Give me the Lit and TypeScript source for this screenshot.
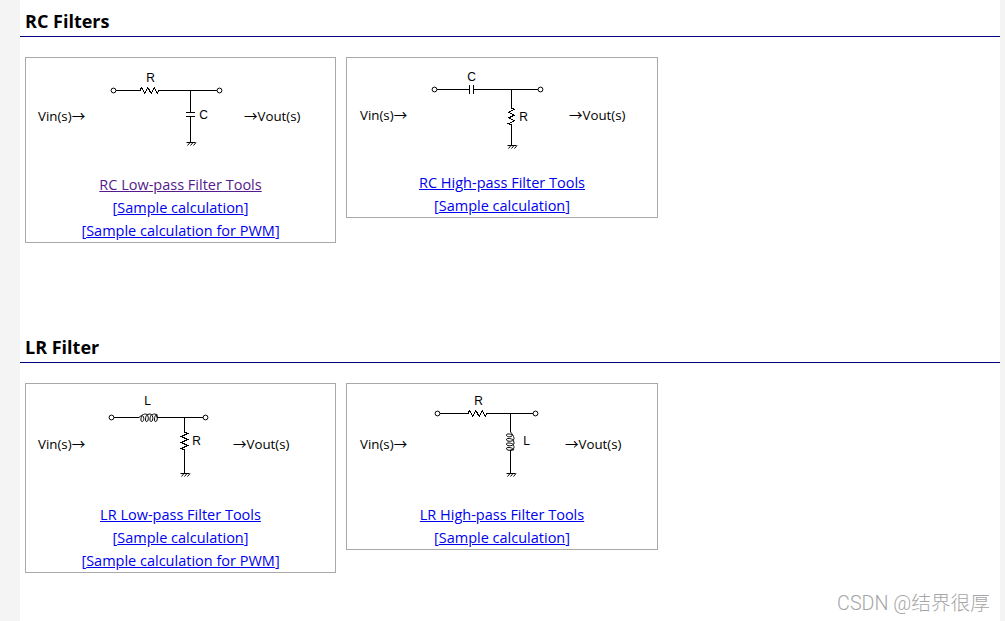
import { LitElement, html, css, svg } from "lit";
import { customElement } from "lit/decorators.js";

const resistorH = (x: number, y: number, w: number) => {
  const n = 3, s = w / (n * 2);
  let d = `M${x} ${y}`;
  for (let i = 0; i < n; i++) {
    d += ` L${x + s * (2 * i + 0.5)} ${y - 3} L${x + s * (2 * i + 1.5)} ${y + 3}`;
  }
  d += ` L${x + w} ${y}`;
  return svg`<path d=${d} />`;
};
const resistorV = (x: number, y: number, h: number) => {
  const n = 3, s = h / (n * 2);
  let d = `M${x} ${y}`;
  for (let i = 0; i < n; i++) {
    d += ` L${x + 3} ${y + s * (2 * i + 0.5)} L${x - 3} ${y + s * (2 * i + 1.5)}`;
  }
  d += ` L${x} ${y + h}`;
  return svg`<path d=${d} />`;
};
const coilH = (x: number, y: number, w: number) => {
  const n = 4, s = w / n;
  let d = `M${x} ${y}`;
  for (let i = 0; i < n; i++) {
    d += ` C${x + s * i + s * 1.3} ${y - 6} ${x + s * i + s * 1.3} ${y + 5} ${x + s * i + s * 0.6} ${y + 4}`;
    d += ` C${x + s * i + s * 0.2} ${y + 3} ${x + s * i + s * 0.6} ${y - 4} ${x + s * (i + 1)} ${y - 3}`;
  }
  d += ` L${x + w} ${y}`;
  return svg`<path class="soft" d=${d} />`;
};
const coilV = (x: number, y: number, h: number) => {
  const n = 4, s = h / n;
  let d = `M${x} ${y}`;
  for (let i = 0; i < n; i++) {
    d += ` C${x + 6} ${y + s * i + s * 1.3} ${x - 5} ${y + s * i + s * 1.3} ${x - 4} ${y + s * i + s * 0.6}`;
    d += ` C${x - 3} ${y + s * i + s * 0.2} ${x + 4} ${y + s * i + s * 0.6} ${x + 3} ${y + s * (i + 1)}`;
  }
  d += ` L${x} ${y + h}`;
  return svg`<path class="soft" d=${d} />`;
};
const ground = (x: number, y: number) => svg`
  <path class="soft" d="M${x - 4} ${y + 0.5} H${x + 5} M${x - 3} ${y + 3.5} L${x - 0.5} ${y + 0.5} M${x} ${y + 3.5} L${x + 2.5} ${y + 0.5} M${x + 3} ${y + 3.5} L${x + 5.5} ${y + 0.5}" />`;
const term = (x: number, y: number) => svg`<circle class="soft" cx=${x} cy=${y} r="2.4" />`;
const wire = (x1: number, y1: number, x2: number, y2: number) =>
  svg`<path d="M${x1} ${y1} L${x2} ${y2}" />`;
const label = (t: string, x: number, y: number) =>
  svg`<text x=${x} y=${y} text-anchor="middle">${t}</text>`;

const circuits = {
  rcLow: svg`
    ${term(113.5, 90.5)}${wire(116, 90.5, 140, 90.5)}${resistorH(140, 90.5, 19)}
    ${wire(159, 90.5, 217, 90.5)}${term(219.5, 90.5)}
    ${wire(190.5, 90.5, 190.5, 112.5)}${wire(186, 112.5, 195, 112.5)}${wire(186, 116.5, 195, 116.5)}
    ${wire(190.5, 116.5, 190.5, 142)}${ground(190.5, 142)}
    ${label("R", 150.5, 81.5)}${label("C", 203.5, 119)}`,
  rcHigh: svg`
    ${term(434.5, 89.5)}${wire(437, 89.5, 469.5, 89.5)}
    ${wire(469.5, 85, 469.5, 94)}${wire(473.5, 85, 473.5, 94)}
    ${wire(473.5, 89.5, 538, 89.5)}${term(540.5, 89.5)}
    ${wire(511.5, 89.5, 511.5, 108)}${resistorV(511.5, 108, 17)}${wire(511.5, 125, 511.5, 145)}${ground(511.5, 145)}
    ${label("C", 471.5, 80.5)}${label("R", 523.5, 121)}`,
  lrLow: svg`
    ${term(111.5, 417.5)}${wire(114, 417.5, 139, 417.5)}${coilH(139, 417.5, 18)}
    ${wire(157, 417.5, 204, 417.5)}${term(205.5, 417.5)}
    ${wire(184.5, 417.5, 184.5, 432)}${resistorV(184.5, 432, 18)}${wire(184.5, 450, 184.5, 473)}${ground(184.5, 473)}
    ${label("L", 147.5, 405)}${label("R", 196.5, 445)}`,
  lrHigh: svg`
    ${term(437.5, 413.5)}${wire(440, 413.5, 468, 413.5)}${resistorH(468, 413.5, 19)}
    ${wire(487, 413.5, 533, 413.5)}${term(535.5, 413.5)}
    ${wire(510.5, 413.5, 510.5, 432)}${coilV(510.5, 432, 18)}${wire(510.5, 450, 510.5, 473)}${ground(510.5, 473)}
    ${label("R", 478.5, 405)}${label("L", 526.5, 445)}`,
};

type Item = {
  key: keyof typeof circuits;
  originX: number;
  originY: number;
  rowH: number;
  vinW: number;
  voutGap: number;
  title: string;
  visited?: boolean;
  pwm: boolean;
};

const sections: { name: string; items: Item[] }[] = [
  {
    name: "RC Filters",
    items: [
      { key: "rcLow", originX: 100, originY: 58, rowH: 115, vinW: 62, voutGap: 14, title: "RC Low-pass Filter Tools", visited: true, pwm: true },
      { key: "rcHigh", originX: 425, originY: 58, rowH: 113, vinW: 65, voutGap: 14, title: "RC High-pass Filter Tools", pwm: false },
    ],
  },
  {
    name: "LR Filter",
    items: [
      { key: "lrLow", originX: 100, originY: 384, rowH: 119, vinW: 62, voutGap: 3, title: "LR Low-pass Filter Tools", pwm: true },
      { key: "lrHigh", originX: 425, originY: 384, rowH: 119, vinW: 65, voutGap: 10, title: "LR High-pass Filter Tools", pwm: false },
    ],
  },
];

@customElement("app-root")
export class AppRoot extends LitElement {
  static styles = css`
    :host {
      display: block;
      position: relative;
      height: 621px;
      overflow: hidden;
      background: #f4f4f4;
      font-family: "Open Sans", "Liberation Sans", sans-serif;
      font-size: 14px;
      color: #000;
    }
    .page {
      margin: 0 5px 0 20px;
      height: 621px;
      background: #fff;
    }
    .section {
      height: 326px;
    }
    .heading {
      margin: 0;
      padding: 8px 0 0 5px;
      box-sizing: border-box;
      border-bottom: 1px solid #000080;
      height: 37px;
      font-size: 18px;
      line-height: 27px;
      font-weight: 700;
    }
    .cards {
      display: flex;
      align-items: flex-start;
      gap: 10px;
      padding: 20px 0 0 5px;
    }
    .card {
      box-sizing: border-box;
      width: 311px;
      border: 1px solid #a9a9a9;
    }
    .card + .card {
      width: 312px;
    }
    .row {
      display: flex;
      padding-left: 12px;
    }
    .card + .card .row {
      padding-left: 13px;
    }
    .side {
      flex: none;
      align-self: center;
      white-space: nowrap;
      line-height: 20px;
      font-size: 13.3px;
    }
    .arrow {
      font-family: "Noto Sans CJK JP", sans-serif;
      font-size: 13.5px;
      line-height: 1;
    }
    svg {
      flex: none;
      fill: none;
      stroke: #000;
      stroke-width: 1;
      width: 130px;
      shape-rendering: crispEdges;
    }
    svg .soft {
      shape-rendering: auto;
    }
    svg circle {
      fill: #fff;
    }
    svg text {
      fill: #000;
      stroke: none;
      font-family: "Liberation Sans", sans-serif;
      font-size: 12px;
    }
    .links {
      text-align: center;
      line-height: 23px;
      font-size: 14.5px;
      color: #0000ee;
    }
    .links a {
      color: #0000ee;
      text-decoration: underline;
    }
    .links a.visited {
      color: #551a8b;
    }
    .mark {
      position: absolute;
      right: 15px;
      top: 591px;
      color: #a6a6a6;
      font-family: Roboto, "Noto Sans CJK SC", sans-serif;
      font-weight: 300;
      font-size: 19.7px;
      line-height: 26px;
      white-space: nowrap;
    }
  `;

  renderCard(c: Item) {
    return html`<div class="card">
      <div class="row">
        <span class="side" style="width:${c.vinW}px">Vin(s)<span class="arrow">→</span></span>
        <svg
          viewBox="${c.originX} ${c.originY} 130 ${c.rowH}"
          style="height:${c.rowH}px"
        >${circuits[c.key]}</svg>
        <span class="side" style="padding-left:${c.voutGap}px"><span class="arrow">→</span>Vout(s)</span>
      </div>
      <div class="links">
        <div><a class=${c.visited ? "visited" : ""} href="#">${c.title}</a></div>
        <div>[<a href="#">Sample calculation</a>]</div>
        ${c.pwm ? html`<div>[<a href="#">Sample calculation for PWM</a>]</div>` : ""}
      </div>
    </div>`;
  }

  render() {
    return html`<div class="page">
        ${sections.map(
          (s) => html`<section class="section">
            <h2 class="heading">${s.name}</h2>
            <div class="cards">${s.items.map((c) => this.renderCard(c))}</div>
          </section>`
        )}
      </div>
      <div class="mark">CSDN @结界很厚</div>`;
  }
}
